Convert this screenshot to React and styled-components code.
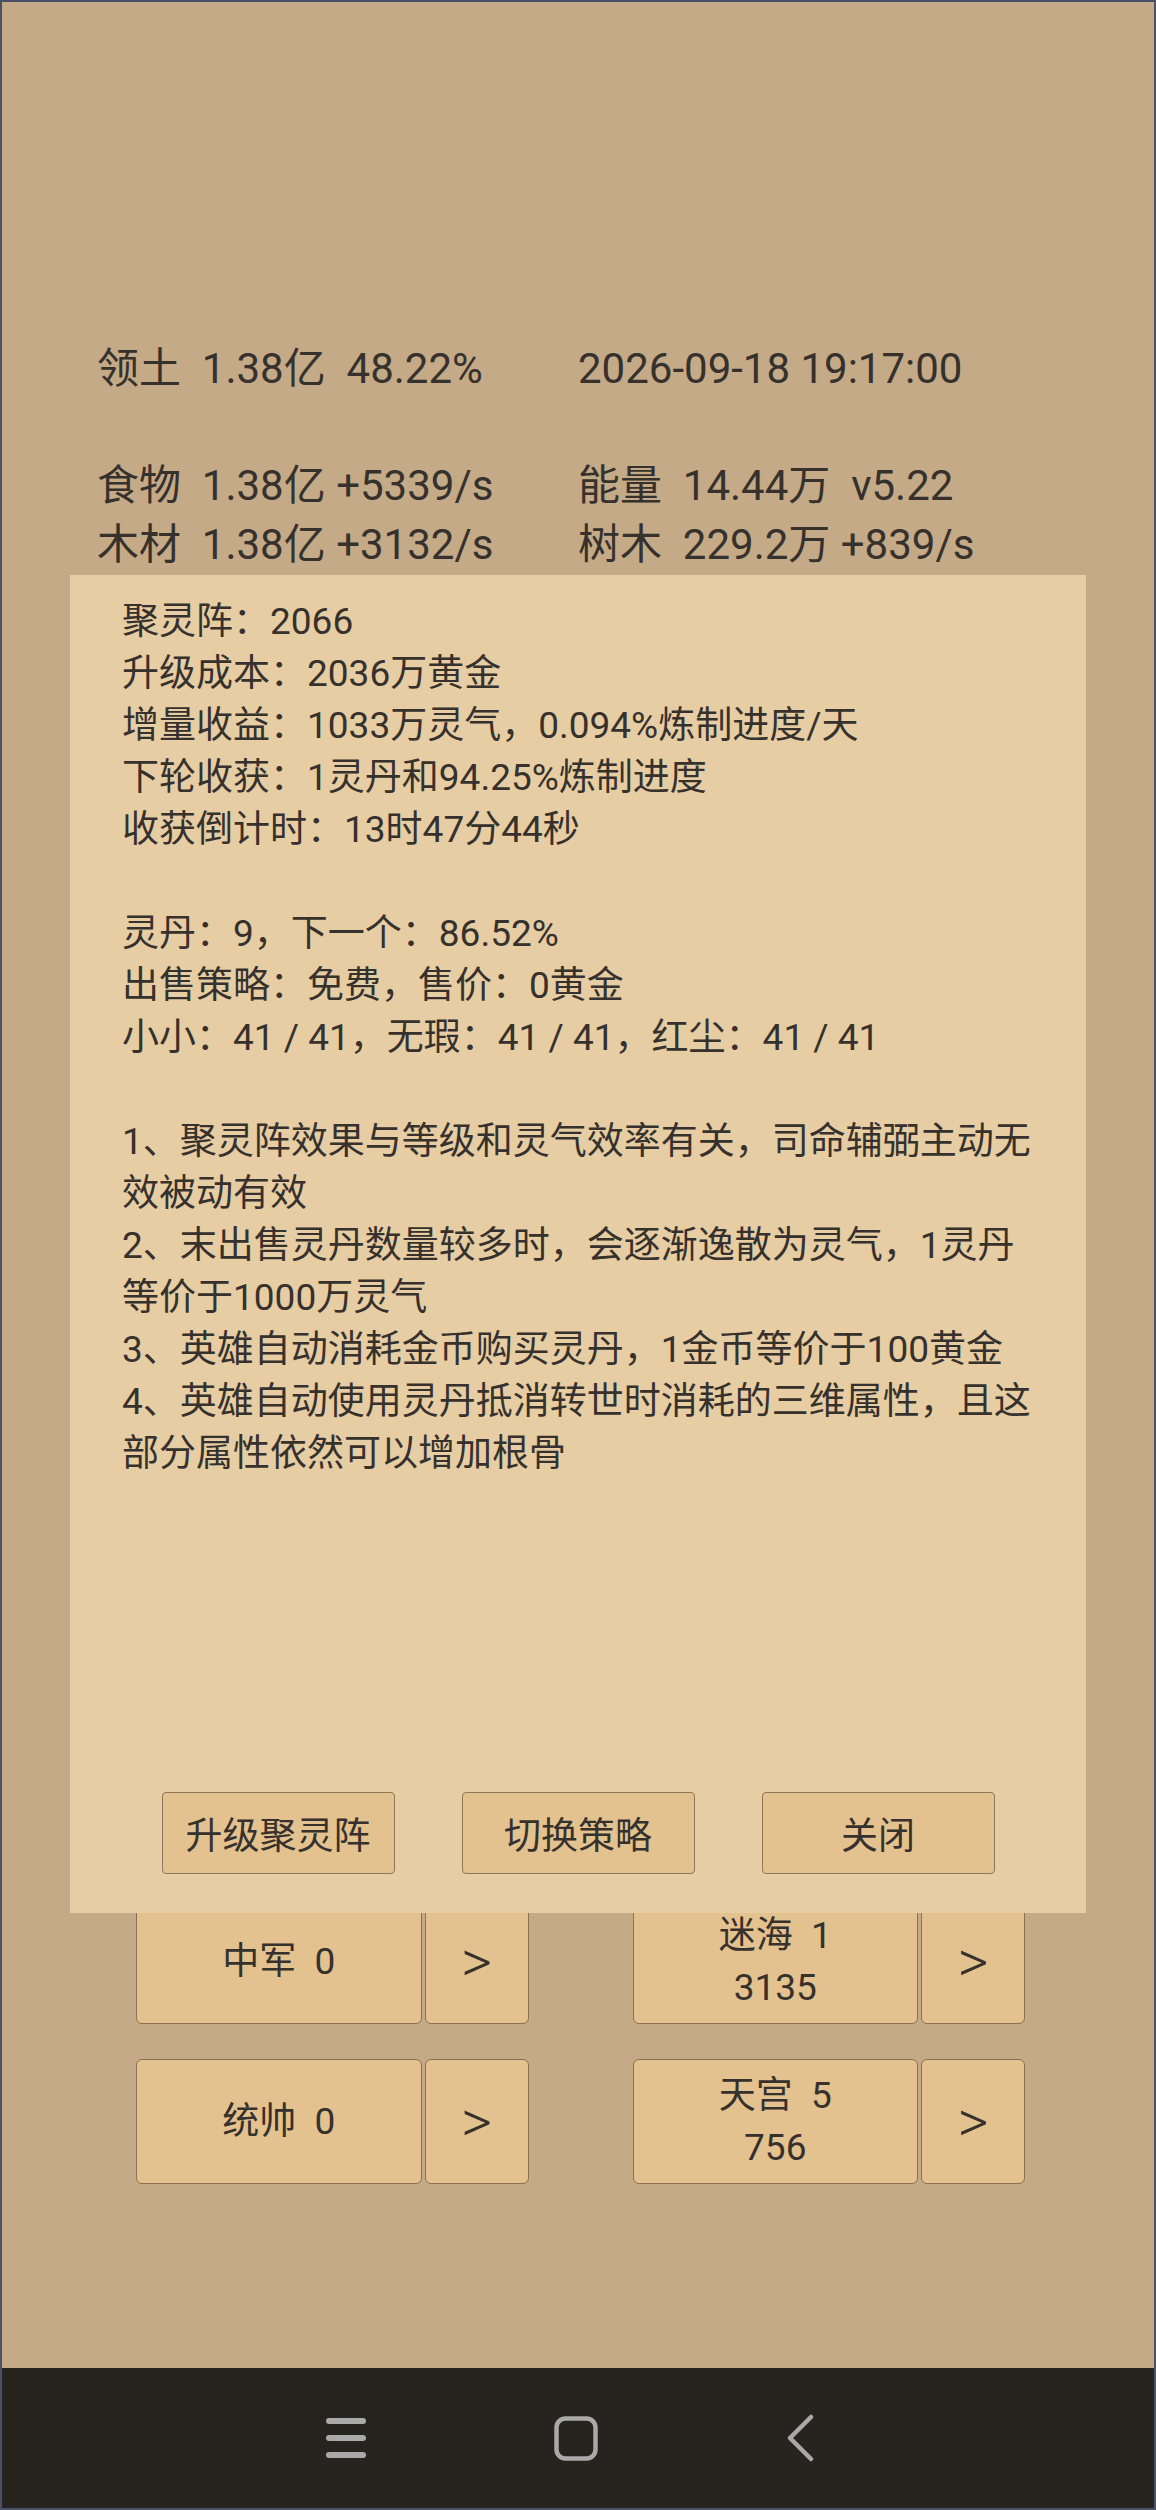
import React from 'react';
import styled, { createGlobalStyle } from 'styled-components';

const GlobalStyle = createGlobalStyle`
  html, body {
    margin: 0;
    padding: 0;
    background: #1b1d24;
  }
`;

const Screen = styled.div`
  position: relative;
  width: 1156px;
  height: 2510px;
  box-sizing: border-box;
  border: 2px solid #4a5169;
  background-color: #c4aa87;
  display: flex;
  flex-direction: column;
  font-family: Roboto, "Noto Sans CJK SC", sans-serif;
  color: #36312c;
`;

const Main = styled.div`
  flex: 1;
  display: flex;
  flex-direction: column;
`;

const Header = styled.div`
  padding: 338px 0 0 95px;
  display: grid;
  grid-template-columns: 481px 1fr;
  grid-auto-rows: 58.5px;
  font-size: 42px;
  line-height: 58.5px;
`;

const Cell = styled.div`
  white-space: pre;
`;

const ButtonGrid = styled.div`
  margin-top: 1325px;
  padding: 0 129px 0 134px;
  display: grid;
  grid-template-columns: 1fr 1fr;
  column-gap: 104px;
  row-gap: 35px;
`;

const ButtonGroup = styled.div`
  display: flex;
  gap: 3px;
  height: 125px;
`;

const GameButton = styled.button`
  box-sizing: border-box;
  flex: ${(p) => (p.$arrow ? '0 0 104px' : '1')};
  border: 1.5px solid #8a7152;
  border-radius: 6px;
  background-color: #e3c28f;
  color: #36312c;
  font-family: Roboto, "Noto Sans CJK SC", sans-serif;
  font-size: ${(p) => (p.$arrow ? '60px' : '37px')};
  font-weight: ${(p) => (p.$arrow ? 300 : 400)};
  line-height: 52px;
  white-space: pre;
  padding: 0;
  display: flex;
  flex-direction: column;
  align-items: center;
  justify-content: center;
`;

const Dialog = styled.div`
  position: absolute;
  top: 573px;
  left: 68px;
  width: 1016px;
  height: 1338px;
  box-sizing: border-box;
  background-color: #e6cda4;
  display: flex;
  flex-direction: column;
  padding: 21px 40px 39px 52px;
`;

const InfoText = styled.div`
  flex: 1;
  font-size: 37px;
  line-height: 52px;
`;

const Line = styled.div`
  white-space: pre-wrap;
  min-height: 52px;
`;

const DialogActions = styled.div`
  display: flex;
  justify-content: center;
  gap: 67px;
  margin-left: -12px;
`;

const DialogButton = styled.button`
  box-sizing: border-box;
  width: 233px;
  height: 82px;
  border: 1.5px solid #8f775a;
  border-radius: 4px;
  background-color: #e3c28f;
  color: #36312c;
  font-family: Roboto, "Noto Sans CJK SC", sans-serif;
  font-size: 37px;
  padding: 0;
`;

const NavBar = styled.div`
  flex: 0 0 140px;
  background-color: #27231e;
  display: flex;
  align-items: center;
  gap: 188px;
  padding-left: 324px;
`;

const MenuIcon = () => (
  <svg width="40" height="40" viewBox="0 0 40 40">
    <rect x="0" y="0" width="40" height="6" rx="3" fill="#a9a9a9" />
    <rect x="0" y="17" width="40" height="6" rx="3" fill="#a9a9a9" />
    <rect x="0" y="34" width="40" height="6" rx="3" fill="#a9a9a9" />
  </svg>
);

const HomeIcon = () => (
  <svg width="44" height="45" viewBox="0 0 44 45">
    <rect x="2.5" y="2.5" width="39" height="40" rx="9" fill="none" stroke="#a9a9a9" strokeWidth="4.5" />
  </svg>
);

const BackIcon = () => (
  <svg width="28" height="48" viewBox="0 0 28 48">
    <polyline points="25,3 4,24 25,45" fill="none" stroke="#a9a9a9" strokeWidth="4.5" strokeLinecap="round" strokeLinejoin="round" />
  </svg>
);

const headerRows = [
  ['领土  1.38亿  48.22%', '2026-09-18 19:17:00'],
  [' ', ' '],
  ['食物  1.38亿 +5339/s', '能量  14.44万  v5.22'],
  ['木材  1.38亿 +3132/s', '树木  229.2万 +839/s'],
];

const infoLines = [
  '聚灵阵：2066',
  '升级成本：2036万黄金',
  '增量收益：1033万灵气，0.094%炼制进度/天',
  '下轮收获：1灵丹和94.25%炼制进度',
  '收获倒计时：13时47分44秒',
  '',
  '灵丹：9，下一个：86.52%',
  '出售策略：免费，售价：0黄金',
  '小小：41 / 41，无瑕：41 / 41，红尘：41 / 41',
  '',
  '1、聚灵阵效果与等级和灵气效率有关，司命辅弼主动无效被动有效',
  '2、末出售灵丹数量较多时，会逐渐逸散为灵气，1灵丹\n等价于1000万灵气',
  '3、英雄自动消耗金币购买灵丹，1金币等价于100黄金',
  '4、英雄自动使用灵丹抵消转世时消耗的三维属性，且这部分属性依然可以增加根骨',
];

const armyRows = [
  [['中军  0'], ['迷海  1', '3135']],
  [['统帅  0'], ['天宫  5', '756']],
];

const App = () => {
  return (
    <>
      <GlobalStyle />
      <Screen>
        <Main>
          <Header>
            {headerRows.map((row, i) =>
              row.map((text, j) => <Cell key={`${i}-${j}`}>{text}</Cell>)
            )}
          </Header>
          <ButtonGrid>
            {armyRows.map((row) =>
              row.map((lines) => (
                <ButtonGroup key={lines[0]}>
                  <GameButton>
                    {lines.map((l) => (
                      <span key={l}>{l}</span>
                    ))}
                  </GameButton>
                  <GameButton $arrow>&gt;</GameButton>
                </ButtonGroup>
              ))
            )}
          </ButtonGrid>
        </Main>
        <NavBar>
          <MenuIcon />
          <HomeIcon />
          <BackIcon />
        </NavBar>
        <Dialog>
          <InfoText>
            {infoLines.map((text, i) => (
              <Line key={i}>{text}</Line>
            ))}
          </InfoText>
          <DialogActions>
            <DialogButton>升级聚灵阵</DialogButton>
            <DialogButton>切换策略</DialogButton>
            <DialogButton>关闭</DialogButton>
          </DialogActions>
        </Dialog>
      </Screen>
    </>
  );
};

export default App;
